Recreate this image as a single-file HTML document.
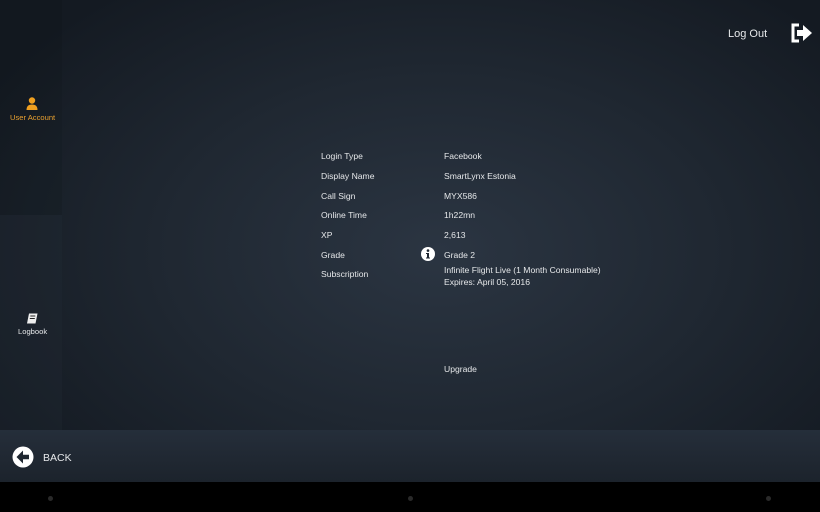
<!DOCTYPE html>
<html><head><meta charset="utf-8"><style>
*{margin:0;padding:0;box-sizing:border-box}
body{width:820px;height:512px;overflow:hidden;background:#000;font-family:"Liberation Sans",sans-serif;color:#e6e8ea;position:relative}
.main{position:absolute;left:0;top:0;width:820px;height:430px;background:radial-gradient(ellipse 520px 330px at 440px 250px,#2b3542 0%,#1f2731 55%,#141a22 100%)}
.side1{position:absolute;left:0;top:0;width:62px;height:215px;background:rgba(10,14,20,0.12)}
.side2{position:absolute;left:0;top:215px;width:62px;height:215px;background:rgba(40,48,58,0.2)}
.bar{position:absolute;left:0;top:430px;width:820px;height:52px;background:linear-gradient(#252e3a,#1c232c)}
.nav{position:absolute;left:0;top:482px;width:820px;height:30px;background:#000}
.dot{position:absolute;top:496px;width:5px;height:5px;border-radius:50%;background:#2a2a2a}
.t{position:absolute;font-size:8.6px;white-space:nowrap}
</style></head><body>
<div class="main"></div><div class="side1"></div><div class="side2"></div>
<svg style="position:absolute;left:26px;top:97px" width="12" height="13" viewBox="0 0 12 13"><circle cx="6" cy="3.5" r="3.2" fill="#f0a020"/><path d="M0.5 13 Q0.5 7.5 6 7.5 Q11.5 7.5 11.5 13Z" fill="#f0a020"/></svg>
<div class="t" style="left:10px;top:113px;color:#e8a030;font-size:7.6px">User Account</div>
<svg style="position:absolute;left:26px;top:313px" width="12" height="11" viewBox="0 0 12 11"><path d="M3 0.5H11.5L9.5 10.5H1Z" fill="#eee"/><path d="M4.3 3H9.3M3.8 5.5H8.8" stroke="#222" stroke-width="1"/></svg>
<div class="t" style="left:18px;top:327px;font-size:7.6px">Logbook</div>
<div class="t" style="left:728px;top:28px;font-size:11px">Log Out</div>
<svg style="position:absolute;left:790px;top:23px" width="23" height="20" viewBox="0 0 23 20"><path d="M9 2H3V18H9" fill="none" stroke="#fff" stroke-width="3"/><path d="M7 7H13V2L22 10L13 18V13H7Z" fill="#fff"/></svg>
<div class="t" style="left:321px;top:151px">Login Type</div><div class="t" style="left:444px;top:151px">Facebook</div>
<div class="t" style="left:321px;top:171px">Display Name</div><div class="t" style="left:444px;top:171px">SmartLynx Estonia</div>
<div class="t" style="left:321px;top:191px">Call Sign</div><div class="t" style="left:444px;top:191px">MYX586</div>
<div class="t" style="left:321px;top:210px">Online Time</div><div class="t" style="left:444px;top:210px">1h22mn</div>
<div class="t" style="left:321px;top:230px">XP</div><div class="t" style="left:444px;top:230px">2,613</div>
<div class="t" style="left:321px;top:250px">Grade</div><div class="t" style="left:444px;top:250px">Grade 2</div>
<svg style="position:absolute;left:421px;top:247px" width="14" height="14" viewBox="0 0 14 14"><circle cx="7" cy="7" r="7" fill="#fff"/><circle cx="7" cy="3.6" r="1.3" fill="#1f2731"/><path d="M5 6H8V10.5H9V11.5H5V10.5H6V7H5Z" fill="#1f2731"/></svg>
<div class="t" style="left:321px;top:269px">Subscription</div><div class="t" style="left:444px;top:265px">Infinite Flight Live (1 Month Consumable)</div>
<div class="t" style="left:444px;top:277px">Expires: April 05, 2016</div>
<div class="t" style="left:444px;top:364px">Upgrade</div>
<div class="bar"></div>
<svg style="position:absolute;left:12px;top:446px" width="22" height="22" viewBox="0 0 22 22"><circle cx="11" cy="11" r="10.5" fill="#fff"/><path d="M11 4.5L4.5 11L11 17.5V13.2H17V8.8H11Z" fill="#1f2731"/></svg>
<div class="t" style="left:43px;top:452px;font-size:10.5px">BACK</div>
<div class="nav"></div>
<div class="dot" style="left:48px"></div><div class="dot" style="left:408px"></div><div class="dot" style="left:766px"></div>
</body></html>
